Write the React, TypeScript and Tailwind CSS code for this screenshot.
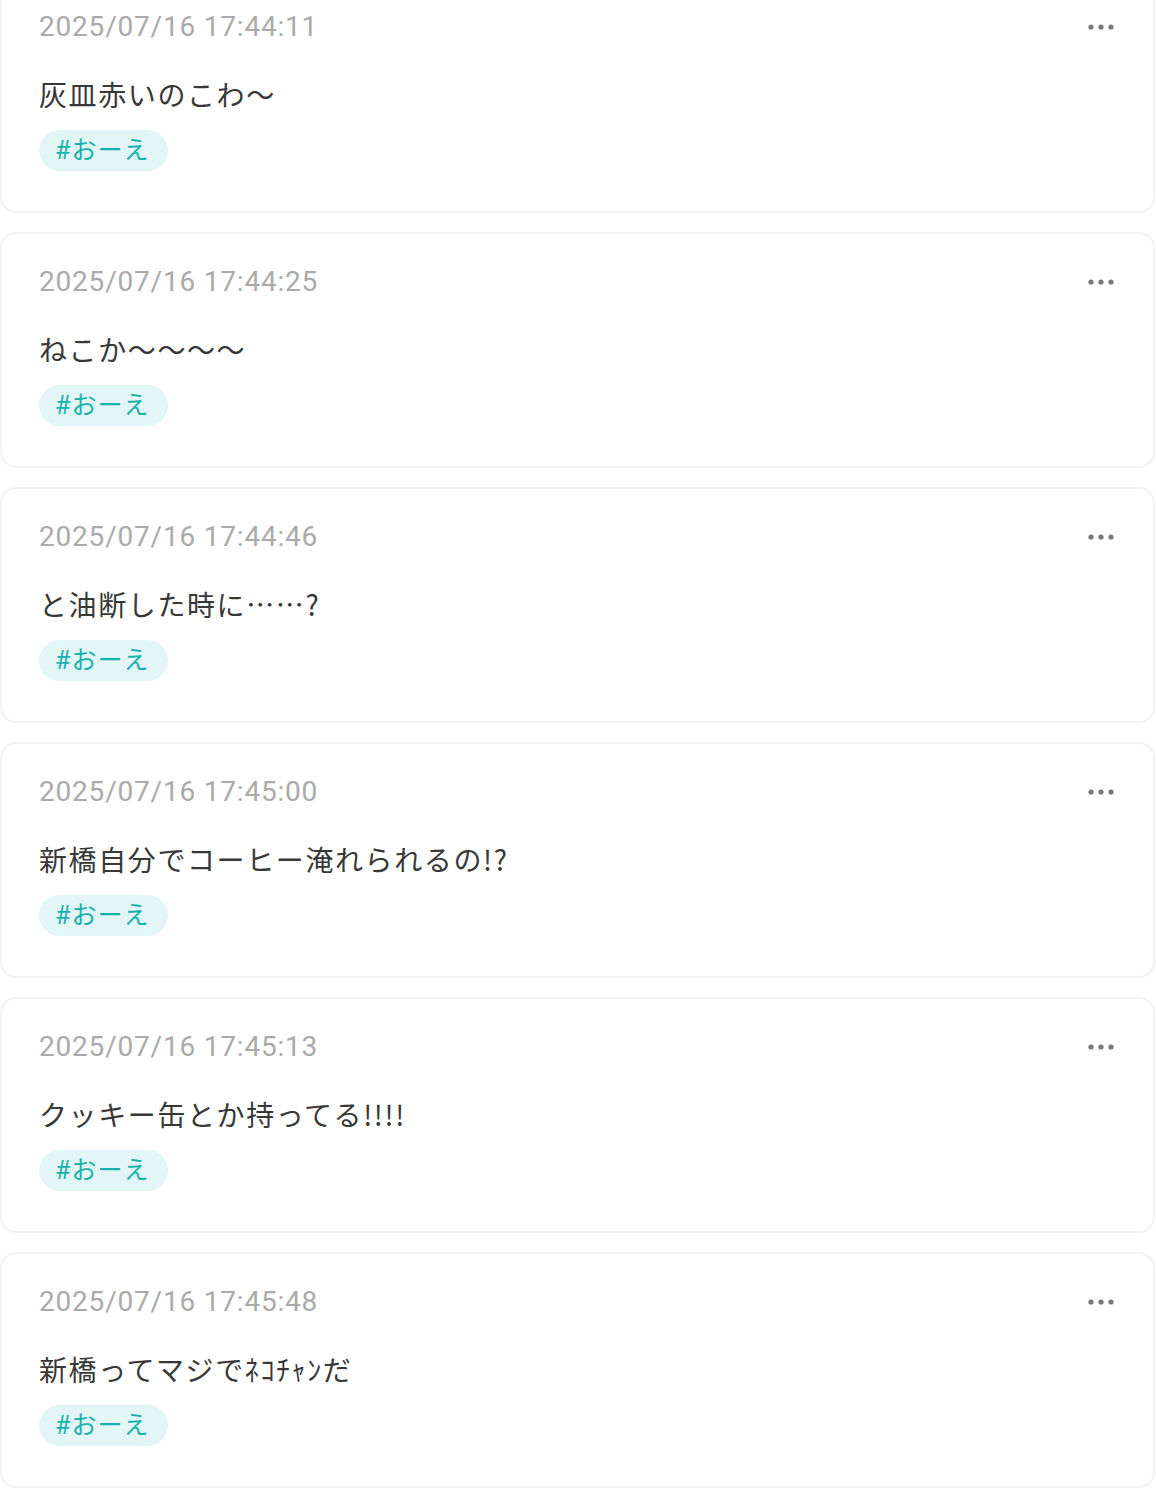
import React from "react";

const posts = [
  { date: "2025/07/16 17:44:11", text: "灰皿赤いのこわ〜" },
  { date: "2025/07/16 17:44:25", text: "ねこか〜〜〜〜" },
  { date: "2025/07/16 17:44:46", text: "と油断した時に……?" },
  { date: "2025/07/16 17:45:00", text: "新橋自分でコーヒー淹れられるの!?" },
  { date: "2025/07/16 17:45:13", text: "クッキー缶とか持ってる!!!!" },
  { date: "2025/07/16 17:45:48", text: "新橋ってマジでﾈｺﾁｬﾝだ" },
];

function Dots() {
  return (
    <svg width="28" height="8" viewBox="0 0 28 8" className="block">
      <circle cx="4" cy="4" r="2.6" fill="#777" />
      <circle cx="14" cy="4" r="2.6" fill="#777" />
      <circle cx="24" cy="4" r="2.6" fill="#777" />
    </svg>
  );
}

export default function App() {
  return (
    <div
      className="bg-white w-[1156px] h-[1492px] overflow-hidden"
      style={{ fontFamily: 'Roboto, "Noto Sans CJK JP", sans-serif' }}
    >
      <div className="-mt-[23px] flex flex-col gap-[19px] pr-[1px]">
        {posts.map((p, i) => (
          <div
            key={i}
            className="border-2 border-[#f2f2f2] rounded-[16px] bg-white pt-[34px] pb-[40px] pl-[37px] pr-[38px]"
          >
            <div className="flex items-center justify-between h-[28px]">
              <span className="text-[28px] leading-[28px] text-[#aaaaaa] tracking-[0.8px]">
                {p.date}
              </span>
              <Dots />
            </div>
            <div
              className="mt-[32px] text-[28px] leading-[42px] text-[#383838] tracking-[1.6px]"
              style={{ fontFamily: '"Noto Sans CJK JP", sans-serif' }}
            >
              {p.text}
            </div>
            <div className="mt-[15px] flex">
              <span className="inline-flex items-center h-[41px] pl-[16px] pr-[19px] rounded-full bg-[#e3f6f6] text-[#17b2ac] text-[25px] tracking-[1px]">
                #おーえ
              </span>
            </div>
          </div>
        ))}
      </div>
    </div>
  );
}
